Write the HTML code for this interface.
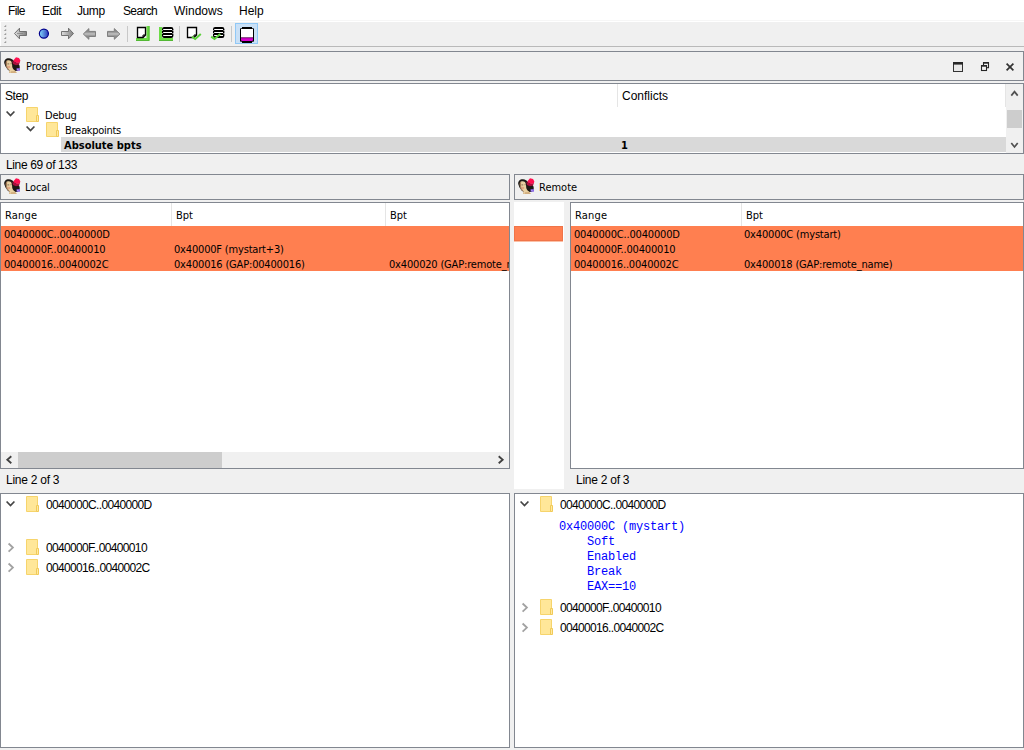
<!DOCTYPE html>
<html><head><meta charset="utf-8"><title>Progress</title>
<style>
html,body{margin:0;padding:0}
body{width:1024px;height:750px;position:relative;overflow:hidden;background:#f0f0f0;
 font:11px/13px "DejaVu Sans Condensed","DejaVu Sans","Liberation Sans",sans-serif;font-stretch:condensed;color:#000}
.a{position:absolute}
.t{position:absolute;white-space:nowrap;line-height:13px;height:13px}
.m{font:12px/14px "Liberation Sans",sans-serif;font-stretch:normal}
.p{position:absolute;border:1px solid #828790;box-sizing:border-box}
.w{background:#fff}
.b{font-size:12px}
.e{letter-spacing:-.66px}
.d{letter-spacing:-.18px}
.o{position:absolute;background:#ff7f50}
.mono{font:12px/15px "Liberation Mono","DejaVu Sans Mono",monospace;letter-spacing:-.2px;font-stretch:normal;color:#00f;white-space:pre}
svg{position:absolute;overflow:visible}
</style></head><body>
<!-- menu bar -->
<div class="a w" style="left:0;top:0;width:1024px;height:22px"></div>
<div class="a" style="left:0;top:20px;width:1024px;height:1px;background:#f6f6f6"></div>
<div class="t m" style="left:8px;top:4px;letter-spacing:-.6px">File</div>
<div class="t m" style="left:42px;top:4px;letter-spacing:-.35px">Edit</div>
<div class="t m" style="left:77px;top:4px;letter-spacing:-.4px">Jump</div>
<div class="t m" style="left:123px;top:4px;letter-spacing:-.65px">Search</div>
<div class="t m" style="left:174px;top:4px;letter-spacing:0px">Windows</div>
<div class="t m" style="left:239px;top:4px;letter-spacing:0px">Help</div>
<!-- toolbar -->
<div class="a w" style="left:0;top:22px;width:1px;height:24px"></div>
<div class="a" style="left:0;top:46px;width:1024px;height:1px;background:#b9b9b9"></div>


<!-- Progress title -->
<div class="p" style="left:0;top:51px;width:1024px;height:30px"></div>
<div class="t" style="left:26px;top:60px;letter-spacing:-.1px">Progress</div>

<!-- Step panel -->
<div class="p w" style="left:0;top:83px;width:1024px;height:71px"></div>
<div class="a" style="left:617px;top:84px;width:1px;height:23px;background:#e5e5e5"></div>
<div class="a" style="left:1005px;top:84px;width:1px;height:23px;background:#e5e5e5"></div>
<div class="t m" style="left:5px;top:89px;letter-spacing:-.4px">Step</div>
<div class="t m" style="left:622px;top:89px">Conflicts</div>
<div class="t" style="left:45px;top:109px;letter-spacing:-.2px">Debug</div>
<div class="t" style="left:65px;top:124px;letter-spacing:-.27px">Breakpoints</div>
<div class="a" style="left:61px;top:137px;width:945px;height:15px;background:#d9d9d9"></div>
<div class="t" style="left:64px;top:139px;font-weight:bold">Absolute bpts</div>
<div class="t" style="left:621px;top:139px;font-weight:bold">1</div>
<!-- v scrollbar -->
<div class="a" style="left:1006px;top:84px;width:17px;height:69px;background:#f0f0f0"></div>
<div class="a" style="left:1007px;top:110px;width:15px;height:18px;background:#cdcdcd"></div>

<div class="t m" style="left:6px;top:158px;letter-spacing:-.36px">Line 69 of 133</div>

<!-- Local / Remote titles -->
<div class="p" style="left:0;top:174px;width:510px;height:26px"></div>
<div class="t" style="left:25px;top:181px;letter-spacing:-.2px">Local</div>
<div class="p" style="left:514px;top:174px;width:510px;height:26px"></div>
<div class="t" style="left:539px;top:181px">Remote</div>

<!-- Local table -->
<div class="p w" style="left:0;top:202px;width:510px;height:267px"></div>
<div class="a" style="left:171px;top:203px;width:1px;height:23px;background:#e5e5e5"></div>
<div class="a" style="left:385px;top:203px;width:1px;height:23px;background:#e5e5e5"></div>
<div class="t" style="left:5px;top:209px;letter-spacing:.2px">Range</div>
<div class="t" style="left:176px;top:209px">Bpt</div>
<div class="t" style="left:390px;top:209px">Bpt</div>
<div class="o" style="left:1px;top:226px;width:508px;height:45px"></div>
<div class="a" style="left:1px;top:226px;width:508px;height:45px;overflow:hidden">
<div class="t d" style="left:3px;top:2px">0040000C..0040000D</div>
<div class="t d" style="left:3px;top:17px">0040000F..00400010</div>
<div class="t d" style="left:3px;top:32px">00400016..0040002C</div>
<div class="t d" style="left:173px;top:17px">0x40000F (mystart+3)</div>
<div class="t d" style="left:173px;top:32px">0x400016 (GAP:00400016)</div>
<div class="t d" style="left:388px;top:32px">0x400020 (GAP:remote_name)</div>
</div>
<!-- h scrollbar -->
<div class="a" style="left:1px;top:452px;width:508px;height:16px;background:#f0f0f0"></div>
<div class="a" style="left:18px;top:452px;width:204px;height:16px;background:#cdcdcd"></div>

<!-- middle strip -->
<div class="a w" style="left:514px;top:202px;width:50px;height:287px"></div>
<div class="o" style="left:514px;top:226px;width:49px;height:15px;box-shadow:inset 0 0 0 1px #f07448"></div><div class="a" style="left:514px;top:241px;width:49px;height:1px;background:#fbc0a6"></div>

<!-- Remote table -->
<div class="p w" style="left:570px;top:202px;width:454px;height:267px"></div>
<div class="a" style="left:741px;top:203px;width:1px;height:23px;background:#e5e5e5"></div>
<div class="t" style="left:575px;top:209px;letter-spacing:.2px">Range</div>
<div class="t" style="left:746px;top:209px">Bpt</div>
<div class="o" style="left:571px;top:226px;width:452px;height:45px"></div>
<div class="t d" style="left:574px;top:228px">0040000C..0040000D</div>
<div class="t d" style="left:574px;top:243px">0040000F..00400010</div>
<div class="t d" style="left:574px;top:258px">00400016..0040002C</div>
<div class="t d" style="left:744px;top:228px">0x40000C (mystart)</div>
<div class="t d" style="left:744px;top:258px">0x400018 (GAP:remote_name)</div>

<div class="t m" style="left:6px;top:473px;letter-spacing:-.25px">Line 2 of 3</div>
<div class="t m" style="left:576px;top:473px;letter-spacing:-.25px">Line 2 of 3</div>

<!-- bottom panels -->
<div class="p w" style="left:0;top:493px;width:510px;height:255px"></div>
<div class="t m e" style="left:46px;top:498px">0040000C..0040000D</div>
<div class="t m e" style="left:46px;top:541px">0040000F..00400010</div>
<div class="t m e" style="left:46px;top:561px">00400016..0040002C</div>

<div class="p w" style="left:514px;top:493px;width:510px;height:255px"></div>
<div class="t m e" style="left:560px;top:498px">0040000C..0040000D</div>
<div class="t mono" style="left:559px;top:520px;height:75px;line-height:15px">0x40000C (mystart)
    Soft
    Enabled
    Break
    EAX==10</div>
<div class="t m e" style="left:560px;top:601px">0040000F..00400010</div>
<div class="t m e" style="left:560px;top:621px">00400016..0040002C</div>

<svg id="ov" style="left:0;top:0" width="1024" height="750" viewBox="0 0 1024 750">
<defs>
<linearGradient id="gg" x1="0" y1="0" x2="1" y2="0"><stop offset="0" stop-color="#e0e0e0"/><stop offset=".45" stop-color="#b4b4b4"/><stop offset="1" stop-color="#808080"/></linearGradient>
<linearGradient id="gs" x1="0" y1="0" x2="0" y2="1"><stop offset="0" stop-color="#858585"/><stop offset=".3" stop-color="#8e8e8e"/><stop offset=".5" stop-color="#c2c2c2"/><stop offset=".7" stop-color="#8e8e8e"/><stop offset="1" stop-color="#858585"/></linearGradient>
<linearGradient id="gb" x1="0" y1="0" x2="1" y2="0"><stop offset="0" stop-color="#86dcff"/><stop offset="1" stop-color="#2a38b8"/></linearGradient>
<g id="fold"><path d="M0.5 0.5H11.5V14.5H0.5Z" fill="#ffe799" stroke="#f6d46c" stroke-width="1"/><path d="M10.5 8.5H12.5V14.5H10.5Z" fill="#ffe9a2" stroke="#f1ca58" stroke-width="1"/></g>
<g id="fold2"><path d="M0.5 0.5H11.5V15.5H0.5Z" fill="#ffe799" stroke="#f6d46c" stroke-width="1"/><path d="M10.5 9.5H12.5V15.5H10.5Z" fill="#ffe9a2" stroke="#f1ca58" stroke-width="1"/></g>
<g id="ada">
<path d="M0.2 6C0 3 2 1.2 4.5 1.2C7 1 9 2.5 10 4L14 6.5C16.2 8 16.2 11.5 14.8 13C13.8 14 12 14.2 11 13.8L9 15L4 13L1.5 9.5Z" fill="#1c1815"/>
<path d="M2 4.4C3 3.1 5.5 2.9 7 4.1C8 5.5 8.2 8 8.2 9.5C8.2 11 9.5 12.5 11 13.5L13 15.9L5 15.9L5.5 13.2C4 13 2.8 11.5 2.4 9.8C1.8 8 1.5 5.8 2 4.4Z" fill="#e9d0a2"/>
<path d="M2 4.6C2.6 4 3 4 3.2 4.4C2.6 6.5 3 9.5 4.6 12L5.6 13.2L5.2 15.9L5 15.9L5.4 13.3C4 13 2.8 11.5 2.4 9.8C1.8 8 1.5 5.8 2 4.6Z" fill="#8a5a3a" opacity=".75"/>
<ellipse cx="4.8" cy="9.9" rx="1.5" ry="1.2" fill="#e09878" opacity=".75"/>
<path d="M3.4 6.9H5.2M6.6 6.7H7.6" stroke="#4a3424" stroke-width=".8" opacity=".8"/>
<path d="M7 14.2L11.2 14L12.8 15.9H6.6Z" fill="#c8a070" opacity=".7"/>
<path d="M9.4 3.2L12 0.2L15 0.9L16.3 3.2L15.9 5.4L13 6L10 4.8Z" fill="#ff1050"/>
<path d="M8.3 4L10 4.6L13 5.9L15.9 5.2L15 7.6L12 8.3L9 7Z" fill="#a80f3c"/>
<rect x="12.6" y="11.2" width="3.4" height="2.5" fill="#8866e8"/><rect x="13.3" y="11.9" width="1.1" height=".9" fill="#c8b8ff"/>
</g>
</defs>
<path d="M6.2 24.8V27H3.8Z" fill="#9c9c9c"/>
<path d="M6.2 28.8V31H3.8Z" fill="#9c9c9c"/>
<path d="M6.2 32.8V35H3.8Z" fill="#9c9c9c"/>
<path d="M6.2 36.8V39H3.8Z" fill="#9c9c9c"/>
<path d="M6.2 40.8V43H3.8Z" fill="#9c9c9c"/>
<path d="M14.5 33.5L19.5 28.2V31.5H26.5V35.5H19.5V38.8Z" fill="url(#gg)" stroke="#686868" stroke-width=".9" stroke-linejoin="miter"/>
<path d="M17 33.5H23" stroke="#808080" stroke-width="1" opacity=".7"/><path d="M63 33.5H70" stroke="#808080" stroke-width="1" opacity=".5"/>
<circle cx="43.9" cy="33.6" r="4.55" fill="url(#gb)" stroke="#00008c" stroke-width="1.2"/>
<path d="M73.5 33.5L68.5 28.2V31.5H61.5V35.5H68.5V38.8Z" fill="url(#gg)" stroke="#686868" stroke-width=".9"/>
<path d="M83.3 34L88.9 28.6V31.4H95.5V36.5H88.9V39.3Z" fill="url(#gs)" stroke="#808080" stroke-width="1"/>
<path d="M119.9 34L114.3 28.6V31.4H107.5V36.5H114.3V39.3Z" fill="url(#gs)" stroke="#808080" stroke-width="1"/>
<rect x="127" y="26" width="1" height="16" fill="#c8c8c8"/>
<rect x="179" y="26" width="1" height="16" fill="#c8c8c8"/>
<rect x="231" y="26" width="1" height="16" fill="#c8c8c8"/>
<path d="M136 38H146.5V26H149.5V41H136Z" fill="#6cdc46"/>
<path d="M137.5 27.5H145.5V35L143 37.5H137.5Z" fill="#fff" stroke="#000" stroke-width="1.35"/><path d="M143 37.5V35H145.5" fill="none" stroke="#000" stroke-width="1"/>
<path d="M136 40.5H149V26" fill="none" stroke="#52b834" stroke-width="1"/>
<path d="M159 27H162V38H173V41H159Z" fill="#6cdc46"/>
<rect x="162" y="27" width="11.4" height="11" rx="2.2" fill="#000"/><rect x="163.2" y="29" width="8.8" height="1" fill="#fff"/><rect x="163.2" y="32" width="8.8" height="1" fill="#fff"/><rect x="163.2" y="35" width="8.8" height="1" fill="#fff"/><rect x="172.6" y="30.0" width="1" height="1" fill="#f0f0f0"/><rect x="161.8" y="30.0" width=".8" height="1" fill="#f0f0f0"/><rect x="172.6" y="33.0" width="1" height="1" fill="#f0f0f0"/><rect x="161.8" y="33.0" width=".8" height="1" fill="#f0f0f0"/>
<path d="M159 40.5H173" fill="none" stroke="#52b834" stroke-width="1"/>
<path d="M187.5 27.5H196.5V35L194 37.5H187.5Z" fill="#fff" stroke="#000" stroke-width="1.35"/><path d="M194 37.5V35H196.5" fill="none" stroke="#000" stroke-width="1"/>
<polyline points="192,36.6 195.2,39 200.8,34" fill="none" stroke="#5cd03a" stroke-width="2"/>
<rect x="213" y="27" width="11.4" height="11" rx="2.2" fill="#000"/><rect x="214.2" y="29" width="8.8" height="1" fill="#fff"/><rect x="214.2" y="32" width="8.8" height="1" fill="#fff"/><rect x="214.2" y="35" width="8.8" height="1" fill="#fff"/><rect x="223.6" y="30.0" width="1" height="1" fill="#f0f0f0"/><rect x="212.8" y="30.0" width=".8" height="1" fill="#f0f0f0"/><rect x="223.6" y="33.0" width="1" height="1" fill="#f0f0f0"/><rect x="212.8" y="33.0" width=".8" height="1" fill="#f0f0f0"/>
<polyline points="211.2,36.6 214.5,39 220.2,34" fill="none" stroke="#5cd03a" stroke-width="2"/>
<rect x="235.5" y="23.5" width="22" height="20" fill="#c9e0f6" stroke="#90c8f6" stroke-width="1"/>
<rect x="242" y="27" width="10" height="16" fill="#000"/><rect x="240" y="28.2" width="14" height="13.6" rx=".8" fill="#000"/>
<rect x="241" y="29" width="12" height="9" fill="#fff"/>
<path d="M241 37.8H253V39.5C253 40.5 252.3 41 251.5 41H242.5C241.7 41 241 40.5 241 39.5Z" fill="#d800d0"/><rect x="241" y="37.4" width="12" height=".8" fill="#50004c"/>
<rect x="953.5" y="62.5" width="9" height="9" fill="#e8e8e8" stroke="#333" stroke-width="1"/><rect x="953" y="62" width="10" height="2.6" fill="#262626"/>
<rect x="983.5" y="62.7" width="5" height="5" fill="none" stroke="#262626" stroke-width="1.1"/><rect x="983" y="62" width="6" height="1.6" fill="#262626"/>
<rect x="981.5" y="65.7" width="5" height="4.8" fill="#f0f0f0" stroke="#262626" stroke-width="1.1"/><rect x="981" y="65" width="6" height="1.6" fill="#262626"/>
<path d="M1006.6 63.6L1013.4 70.4M1013.4 63.6L1006.6 70.4" stroke="#333" stroke-width="1.7" fill="none"/>
<use href="#ada" x="4" y="57"/>
<use href="#ada" x="4" y="178"/>
<use href="#ada" x="518" y="178"/>
<polyline points="6.6,111.5 10.5,115.6 14.4,111.5" fill="none" stroke="#454545" stroke-width="1.7"/>
<use href="#fold" x="26" y="107"/>
<polyline points="26.6,126.5 30.5,130.6 34.4,126.5" fill="none" stroke="#454545" stroke-width="1.7"/>
<use href="#fold" x="46" y="122"/>
<polyline points="1011.3,95.6 1014.5,91.6 1017.7,95.6" fill="none" stroke="#505050" stroke-width="1.7"/>
<polyline points="1011.3,143 1014.5,147 1017.7,143" fill="none" stroke="#505050" stroke-width="1.7"/>
<polyline points="11.3,456.3 7.3,459.8 11.3,463.3" fill="none" stroke="#404040" stroke-width="1.8"/>
<polyline points="498.7,456.3 502.7,459.8 498.7,463.3" fill="none" stroke="#404040" stroke-width="1.8"/>
<polyline points="6.6,501.5 10.5,505.6 14.4,501.5" fill="none" stroke="#454545" stroke-width="1.7"/>
<use href="#fold2" x="26" y="496"/>
<polyline points="8.6,543.5 12.9,547.6 8.6,551.7" fill="none" stroke="#a2a2a2" stroke-width="1.8"/>
<use href="#fold2" x="26" y="539"/>
<polyline points="8.6,563.5 12.9,567.6 8.6,571.7" fill="none" stroke="#a2a2a2" stroke-width="1.8"/>
<use href="#fold2" x="26" y="559"/>
<polyline points="520.6,501.5 524.5,505.6 528.4,501.5" fill="none" stroke="#454545" stroke-width="1.7"/>
<use href="#fold2" x="540" y="496"/>
<polyline points="522.6,603.5 526.9,607.6 522.6,611.7" fill="none" stroke="#a2a2a2" stroke-width="1.8"/>
<use href="#fold2" x="540" y="599"/>
<polyline points="522.6,623.5 526.9,627.6 522.6,631.7" fill="none" stroke="#a2a2a2" stroke-width="1.8"/>
<use href="#fold2" x="540" y="619"/>
</svg>
</body></html>
